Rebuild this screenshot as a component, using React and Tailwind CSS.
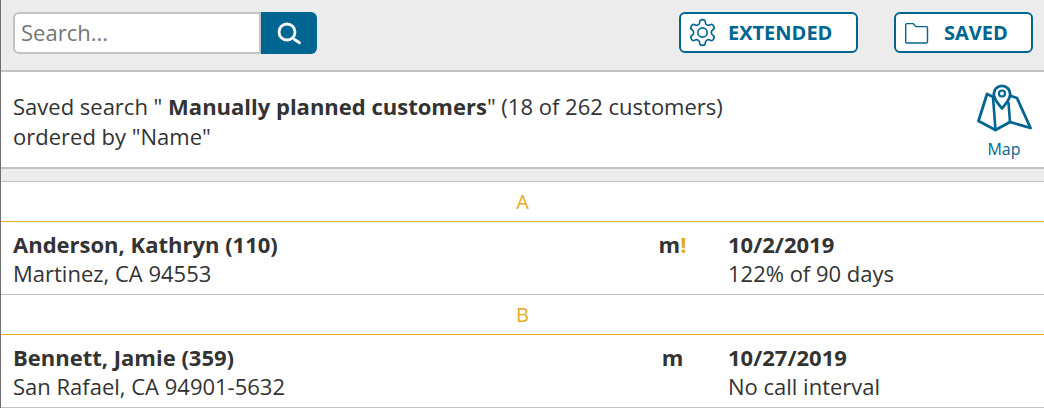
import React from "react";

function Gear() {
  return (
    <svg width="31" height="31" viewBox="0 0 24 24" fill="none" stroke="#006591" strokeWidth="1.25" strokeLinejoin="round" strokeLinecap="round">
      <path d="M12.22 2h-.44a2 2 0 0 0-2 2v.18a2 2 0 0 1-1 1.73l-.43.25a2 2 0 0 1-2 0l-.15-.08a2 2 0 0 0-2.73.73l-.22.38a2 2 0 0 0 .73 2.73l.15.1a2 2 0 0 1 1 1.72v.51a2 2 0 0 1-1 1.74l-.15.09a2 2 0 0 0-.73 2.73l.22.38a2 2 0 0 0 2.73.73l.15-.08a2 2 0 0 1 2 0l.43.25a2 2 0 0 1 1 1.73V20a2 2 0 0 0 2 2h.44a2 2 0 0 0 2-2v-.18a2 2 0 0 1 1-1.73l.43-.25a2 2 0 0 1 2 0l.15.08a2 2 0 0 0 2.73-.73l.22-.39a2 2 0 0 0-.73-2.73l-.15-.08a2 2 0 0 1-1-1.74v-.5a2 2 0 0 1 1-1.74l.15-.09a2 2 0 0 0 .73-2.73l-.22-.38a2 2 0 0 0-2.73-.73l-.15.08a2 2 0 0 1-2 0l-.43-.25a2 2 0 0 1-1-1.73V4a2 2 0 0 0-2-2z" />
      <circle cx="12" cy="12" r="3.6" />
    </svg>
  );
}

function Folder() {
  return (
    <svg width="26" height="24" viewBox="0 0 26 24" fill="none" stroke="#006591" strokeWidth="1.4" strokeLinejoin="round">
      <path d="M1.7 3.600a1 1 0 0 1 1-1h6.600l2.400 3h10.600a1.200 1.200 0 0 1 1.200 1.200v14a1.200 1.200 0 0 1-1.200 1.200H2.900a1.200 1.200 0 0 1-1.200-1.200z" />
    </svg>
  );
}

function SearchIcon() {
  return (
    <svg width="26" height="26" viewBox="0 0 26 26" fill="none" stroke="#ffffff" strokeLinecap="round">
      <circle cx="11" cy="12" r="8" strokeWidth="2.800" />
      <path d="M18.500 19.500l5 3.200" strokeWidth="2.800" />
    </svg>
  );
}

function MapIcon() {
  return (
    <svg width="56" height="50" viewBox="0 0 56 50" fill="none" stroke="#006591" strokeWidth="2.800" strokeLinejoin="round" strokeLinecap="round">
      <path d="M18.500 14.500L11 11 2.500 38l17 9 14.500-8 20.500 6-13.500-30-7.500-2.500" />
      <path d="M17 14l2.500 33M32.500 20L34 39" strokeWidth="2.600" />
      <path d="M26 25.500c-3.800-4.800-8.200-9-8.200-14.500a8.200 8.200 0 0 1 16.400 0c0 5.500-4.400 9.700-8.200 14.500z" fill="#ffffff" />
      <circle cx="26" cy="10.500" r="3" strokeWidth="2.200" />
    </svg>
  );
}

function Row({ name, address, warn, date, note }) {
  return (
    <div className="flex h-[73px] bg-white border-b border-[#c1c4c6] text-[#333333]">
      <div className="w-[616px] pl-[12px] pt-[7px]">
        <div className="font-bold leading-[30px]">{name}</div>
        <div className="leading-[29px]">{address}</div>
      </div>
      <div className="w-[111px] pt-[8px] text-center font-bold leading-[29px]">
        m{warn && <span className="text-[#e8ab1e]">!</span>}
      </div>
      <div className="pt-[7px]">
        <div className="font-bold leading-[30px]">{date}</div>
        <div className="leading-[29px]">{note}</div>
      </div>
    </div>
  );
}

function Letter({ children }) {
  return (
    <div className="h-[40px] flex items-center justify-center bg-white border-b border-[#e8ab1e] text-[#e8ab1e] text-[20px]">{children}</div>
  );
}

export default function App() {
  return (
    <div className="w-[1044px] h-[408px] overflow-hidden bg-white border-l border-l-[#6f6f6f] text-[22px] font-['Open_Sans',sans-serif]">
      <div className="flex items-center h-[72px] bg-[#ececec] border-b-2 border-[#c1c4c6] pl-[12px] pb-[5px]">
        <div className="flex h-[42px] w-[304px]">
          <div className="flex-1 flex items-center bg-white border-2 border-[#c1c4c6] rounded-l-[6px] pl-[6px] text-[#757575] text-[22px]">Search...</div>
          <div className="w-[56px] flex items-center justify-center bg-[#006591] rounded-r-[6px]"><SearchIcon /></div>
        </div>
        <button className="ml-[362px] flex items-center h-[41px] w-[179px] bg-white border-2 border-[#006591] rounded-[6px] pl-[6px] gap-[10px] text-[#006591] font-bold text-[20px]">
          <Gear />
          <span>EXTENDED</span>
        </button>
        <button className="ml-[36px] flex items-center h-[41px] w-[139px] bg-white border-2 border-[#006591] rounded-[6px] pl-[8px] gap-[14px] text-[#006591] font-bold text-[20px]">
          <Folder />
          <span>SAVED</span>
        </button>
      </div>
      <div className="flex h-[97px] bg-white border-b-2 border-[#c1c4c6]">
        <div className="flex-1 pl-[12px] pt-[19px] leading-[30px] text-[#333333]">
          <div>Saved search " <b>Manually planned customers</b>" (18 of 262 customers)</div>
          <div>ordered by "Name"</div>
        </div>
        <div className="w-[66px] pr-[14px] flex flex-col items-center pt-[11px] text-[#006591] text-[16px]">
          <div className="shrink-0"><MapIcon /></div>
          <span className="leading-[22px] mt-[5px]">Map</span>
        </div>
      </div>
      <div className="h-[13px] bg-[#ececec] border-b border-[#c1c4c6]"></div>
      <Letter>A</Letter>
      <Row name="Anderson, Kathryn (110)" address="Martinez, CA 94553" warn date="10/2/2019" note="122% of 90 days" />
      <Letter>B</Letter>
      <Row name="Bennett, Jamie (359)" address="San Rafael, CA 94901-5632" date="10/27/2019" note="No call interval" />
    </div>
  );
}
